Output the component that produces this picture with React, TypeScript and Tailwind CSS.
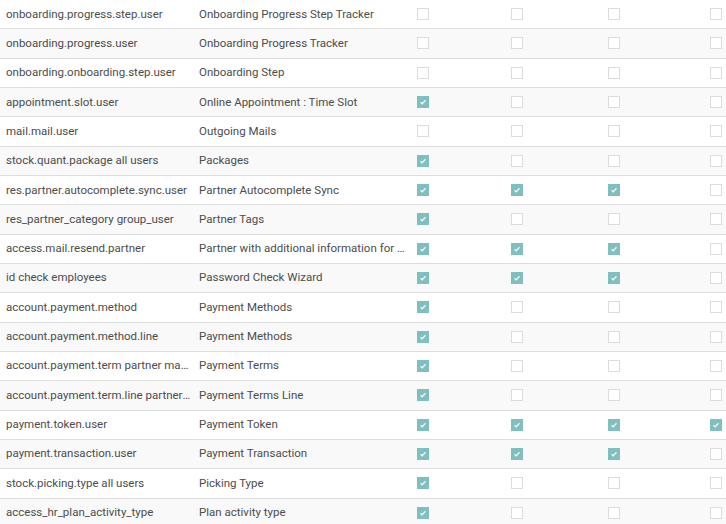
type Rule = {
  name: string;
  model: string;
  perms: [boolean, boolean, boolean, boolean];
};

const rules: Rule[] = [
  { name: 'onboarding.progress.step.user', model: 'Onboarding Progress Step Tracker', perms: [false, false, false, false] },
  { name: 'onboarding.progress.user', model: 'Onboarding Progress Tracker', perms: [false, false, false, false] },
  { name: 'onboarding.onboarding.step.user', model: 'Onboarding Step', perms: [false, false, false, false] },
  { name: 'appointment.slot.user', model: 'Online Appointment : Time Slot', perms: [true, false, false, false] },
  { name: 'mail.mail.user', model: 'Outgoing Mails', perms: [false, false, false, false] },
  { name: 'stock.quant.package all users', model: 'Packages', perms: [true, false, false, false] },
  { name: 'res.partner.autocomplete.sync.user', model: 'Partner Autocomplete Sync', perms: [true, true, true, false] },
  { name: 'res_partner_category group_user', model: 'Partner Tags', perms: [true, false, false, false] },
  { name: 'access.mail.resend.partner', model: 'Partner with additional information for mail resend', perms: [true, true, true, false] },
  { name: 'id check employees', model: 'Password Check Wizard', perms: [true, true, true, false] },
  { name: 'account.payment.method', model: 'Payment Methods', perms: [true, false, false, false] },
  { name: 'account.payment.method.line', model: 'Payment Methods', perms: [true, false, false, false] },
  { name: 'account.payment.term partner manager', model: 'Payment Terms', perms: [true, false, false, false] },
  { name: 'account.payment.term.line partner manager', model: 'Payment Terms Line', perms: [true, false, false, false] },
  { name: 'payment.token.user', model: 'Payment Token', perms: [true, true, true, true] },
  { name: 'payment.transaction.user', model: 'Payment Transaction', perms: [true, true, true, false] },
  { name: 'stock.picking.type all users', model: 'Picking Type', perms: [true, false, false, false] },
  { name: 'access_hr_plan_activity_type', model: 'Plan activity type', perms: [true, false, false, false] },
];

function Check({ on }: { on: boolean }) {
  if (!on) {
    return <div className="w-3 h-3 border border-[#dcdcdc] bg-white" />;
  }
  return (
    <div className="w-3 h-3 bg-[#80bfc0] flex items-center justify-center">
      <svg width="8" height="8" viewBox="0 0 8 8">
        <path d="M1.5 4.3 L3.2 5.8 L6.5 2.2" stroke="#eef7f7" strokeWidth="1.3" fill="none" />
      </svg>
    </div>
  );
}

export default function App() {
  return (
    <div
      className="w-[726px] h-[524px] overflow-hidden bg-white text-[#4c4c4c] text-[11.5px]"
      style={{ fontFamily: 'Roboto, "Open Sans", sans-serif' }}
    >
      <div className="-mt-px">
        {rules.map((r, i) => (
          <div
            key={r.name}
            className={`grid grid-cols-[193px_218px_94px_97px_102px_1fr] h-[29.33px] border-t border-[#dedede] items-center ${
              i % 2 === 1 ? 'bg-[#f9f9f9]' : 'bg-white'
            }`}
          >
            <div className="pl-[6px] pr-px truncate">{r.name}</div>
            <div className="pl-[6px] pr-px truncate">{r.model}</div>
            {r.perms.map((p, j) => (
              <div key={j} className="pl-[6px]">
                <Check on={p} />
              </div>
            ))}
          </div>
        ))}
      </div>
    </div>
  );
}
